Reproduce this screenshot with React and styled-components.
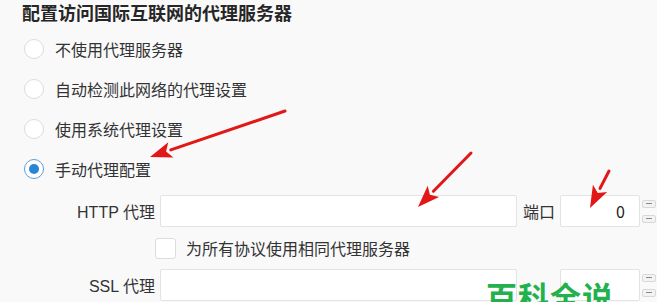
import React from "react";
import styled, { createGlobalStyle } from "styled-components";

const GlobalStyle = createGlobalStyle`
  html, body {
    margin: 0;
    padding: 0;
    background: #f9f9fa;
    overflow: hidden;
  }
  body {
    font-family: "Noto Sans CJK SC", "Noto Sans", sans-serif;
    color: #333;
  }
`;

const Page = styled.div`
  position: relative;
  width: 657px;
  height: 302px;
  overflow: hidden;
  padding: 1px 0 0 22px;
  box-sizing: border-box;
`;

const Title = styled.h2`
  margin: 0;
  font-size: 18px;
  font-weight: 700;
  line-height: 22px;
  color: #262626;
`;

const RadioList = styled.div`
  display: flex;
  flex-direction: column;
  margin-top: 6px;
`;

const RadioRow = styled.label`
  display: flex;
  align-items: center;
  height: 40px;
  gap: 11px;
  padding-left: 2px;
  font-size: 16px;
`;

const RadioDot = styled.span`
  width: 20px;
  height: 20px;
  border-radius: 50%;
  box-sizing: border-box;
  border: 1.5px solid ${(p) => (p.checked ? "#5c9fd6" : "#dcdcdc")};
  background: #fff;
  display: flex;
  align-items: center;
  justify-content: center;
  &::after {
    content: "";
    display: ${(p) => (p.checked ? "block" : "none")};
    width: 10px;
    height: 10px;
    border-radius: 50%;
    background: #2a86d0;
  }
`;

const Form = styled.div`
  display: grid;
  grid-template-columns: 133px 357px 33px 80px 17px;
  column-gap: 5px;
  align-items: center;
  margin-top: 6px;
`;

const FieldLabel = styled.span`
  font-size: 16px;
  text-align: right;
  white-space: nowrap;
  font-family: "Liberation Sans", "Noto Sans CJK SC", sans-serif;
`;

const PortLabel = styled.span`
  font-size: 16px;
  padding-left: 1px;
`;

const TextInput = styled.div`
  height: 32px;
  box-sizing: border-box;
  background: #fff;
  border: 1px solid #e3e3e3;
  border-radius: 2px;
  font-size: 16px;
  display: flex;
  align-items: center;
  justify-content: flex-end;
  padding-right: ${(p) => (p.port ? "14px" : "0")};
  color: #222;
`;

const Stepper = styled.div`
  display: flex;
  flex-direction: column;
  gap: 7px;
  margin-left: -3px;
`;

const StepBtn = styled.span`
  width: 14px;
  height: 8px;
  box-sizing: border-box;
  border: 1px solid #d8d8d8;
  border-radius: 2px;
  background: #f3f3f3;
  display: flex;
  align-items: center;
  justify-content: center;
  &::after {
    content: "";
    width: 6px;
    height: 1px;
    background: #888;
  }
`;

const CheckRow = styled.label`
  grid-column: 2 / span 4;
  display: flex;
  align-items: center;
  gap: 10px;
  height: 42px;
  margin-left: -5px;
  font-size: 16px;
`;

const CheckBox = styled.span`
  width: 21px;
  height: 21px;
  box-sizing: border-box;
  border: 1px solid #dcdcdc;
  border-radius: 3px;
  background: #fff;
`;

const Spacer = styled.span``;

const Watermark = styled.div`
  position: absolute;
  left: 486px;
  top: 278px;
  font-size: 31px;
  font-weight: 700;
  letter-spacing: 1px;
  color: #22b14c;
  line-height: 36px;
`;

const Arrows = styled.svg`
  position: absolute;
  left: 0;
  top: 0;
  pointer-events: none;
`;

const radios = [
  { label: "不使用代理服务器" },
  { label: "自动检测此网络的代理设置" },
  { label: "使用系统代理设置" },
  { label: "手动代理配置", checked: true },
];

const Arrow = ({ x1, y1, x2, y2 }) => {
  const ang = Math.atan2(y2 - y1, x2 - x1);
  const len = 22;
  const w = 8;
  const bx = x2 - Math.cos(ang) * len;
  const by = y2 - Math.sin(ang) * len;
  const px = -Math.sin(ang) * w;
  const py = Math.cos(ang) * w;
  return (
    <g>
      <line x1={x1} y1={y1} x2={bx} y2={by} stroke="#e01818" strokeWidth="3" strokeLinecap="round" />
      <polygon
        points={`${x2},${y2} ${bx + px},${by + py} ${bx + Math.cos(ang) * 5},${by + Math.sin(ang) * 5} ${bx - px},${by - py}`}
        fill="#e01818"
      />
    </g>
  );
};

export default function App() {
  return (
    <>
      <GlobalStyle />
      <Page>
        <Title>配置访问国际互联网的代理服务器</Title>
        <RadioList>
          {radios.map((r) => (
            <RadioRow key={r.label}>
              <RadioDot checked={r.checked} />
              {r.label}
            </RadioRow>
          ))}
        </RadioList>
        <Form>
          <FieldLabel>HTTP 代理</FieldLabel>
          <TextInput />
          <PortLabel>端口</PortLabel>
          <TextInput port>0</TextInput>
          <Stepper>
            <StepBtn />
            <StepBtn />
          </Stepper>

          <Spacer />
          <CheckRow>
            <CheckBox />
            为所有协议使用相同代理服务器
          </CheckRow>

          <FieldLabel>SSL 代理</FieldLabel>
          <TextInput />
          <Spacer />
          <TextInput port />
          <Stepper>
            <StepBtn />
            <StepBtn />
          </Stepper>
        </Form>
        <Watermark>百科全说</Watermark>
        <Arrows width="657" height="302">
          <Arrow x1={285} y1={111} x2={150} y2={157} />
          <Arrow x1={471} y1={153} x2={418} y2={207} />
          <Arrow x1={609} y1={171} x2={590} y2={208} />
        </Arrows>
      </Page>
    </>
  );
}
